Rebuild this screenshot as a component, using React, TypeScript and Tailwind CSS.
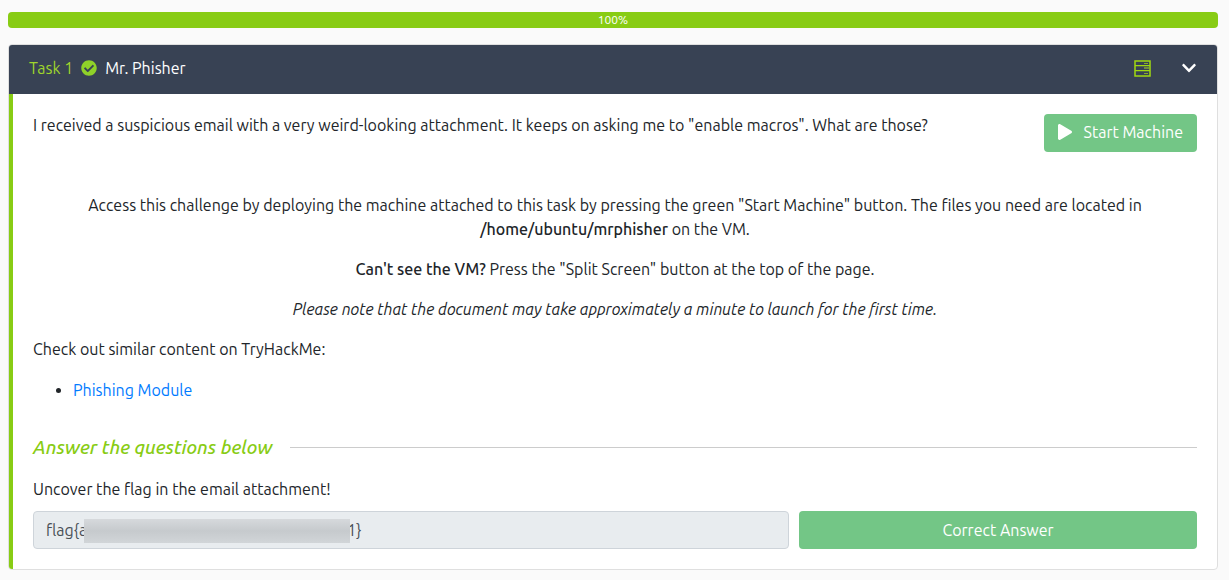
import { FaCheckCircle, FaChevronDown, FaPlay } from "react-icons/fa";

const maskedFlag = `flag{a${"\u00a0".repeat(71)}1}`;

function ServerIcon() {
  return (
    <svg viewBox="0 0 17 17" className="size-[17px]" fill="none" aria-hidden="true">
      <path d="M1 5.5H16M1 10.5H16" stroke="#a0d911" strokeWidth="1.25" />
      <rect x="10" y="7" width="5" height="2" fill="#6f8d3c" />
      <path d="M10 3.5H14M10 13.5H14" stroke="#88ad2b" />
      <rect x="1" y="1" width="15" height="15" stroke="#a0d911" strokeWidth="1.5" />
    </svg>
  );
}

export default function App() {
  return (
    <main className="min-h-screen bg-[#fafafa] py-3 pr-[11px] pl-2 font-['Ubuntu','Noto_Sans',sans-serif] text-base leading-6 text-[#212529]">
      <div
        role="progressbar"
        aria-label="Room progress"
        aria-valuenow={100}
        className="mb-4 h-4 rounded bg-[#88cc14] text-center text-xs leading-4 text-white"
      >
        100%
      </div>

      <section className="overflow-hidden rounded border border-[#dfdfdf] bg-white">
        <header className="flex h-[49px] items-center justify-between bg-[#384254] pr-5 pb-[3px] pl-5 text-white">
          <h2 className="flex items-center gap-2">
            <span className="text-[#9fd52c]">Task 1</span>
            <FaCheckCircle className="size-4 text-[#8fd129]" aria-label="Completed" />
            <span>Mr. Phisher</span>
          </h2>
          <div className="flex items-center gap-[30px]">
            <ServerIcon />
            <button type="button" aria-label="Collapse task">
              <FaChevronDown className="size-4" />
            </button>
          </div>
        </header>

        <div className="border-l-4 border-[#88cc14] px-5 pt-5 pb-5">
          <div className="mb-[41px] flex items-start justify-between">
            <p className="-mt-px">
              I received a suspicious email with a very weird-looking attachment. It keeps on asking
              me to "enable macros". What are those?
            </p>
            <button
              type="button"
              className="flex h-[38px] shrink-0 items-center gap-3 rounded bg-[#73c686] px-[14px] pb-[2px] text-white"
            >
              <FaPlay className="h-4 w-[14px]" />
              Start Machine
            </button>
          </div>

          <div className="mb-4 space-y-4 text-center">
            <p>
              Access this challenge by deploying the machine attached to this task by pressing the
              green "Start Machine" button. The files you need are located in
              <br />
              <span className="font-medium">/home/ubuntu/mrphisher</span> on the VM.
            </p>
            <p>
              <span className="font-medium">Can't see the VM?</span> Press the "Split Screen" button
              at the top of the page.
            </p>
            <p className="italic">
              Please note that the document may take approximately a minute to launch for the first
              time.
            </p>
          </div>

          <p className="mb-[17px]">Check out similar content on TryHackMe:</p>
          <ul className="list-disc pl-10">
            <li>
              <a href="#phishing" className="text-[#007bff]">
                Phishing Module
              </a>
            </li>
          </ul>

          <div className="mt-[31px] mb-4 flex items-center gap-[18px]">
            <h3 className="text-[19px] leading-7 font-medium text-[#88cc14] italic">
              Answer the questions below
            </h3>
            <hr className="flex-1 border-[#cccccc]" />
          </div>

          <label htmlFor="answer" className="mb-[10px] block">
            Uncover the flag in the email attachment!
          </label>
          <div className="grid grid-cols-[1.9fr_1fr] gap-[10px]">
            <div className="relative">
              <input
                id="answer"
                readOnly
                value={maskedFlag}
                className="h-[38px] w-full rounded border border-[#ced4da] bg-[#e8ecef] px-3 text-[#495057]"
              />
              <span className="absolute top-2 left-[51px] h-6 w-[266px] bg-linear-to-b from-[#d6d9dc] via-[#c6cacd] to-[#d1d5d8]" />
            </div>
            <button type="button" className="h-[38px] rounded bg-[#73c686] text-white">
              Correct Answer
            </button>
          </div>
        </div>
      </section>
    </main>
  );
}
